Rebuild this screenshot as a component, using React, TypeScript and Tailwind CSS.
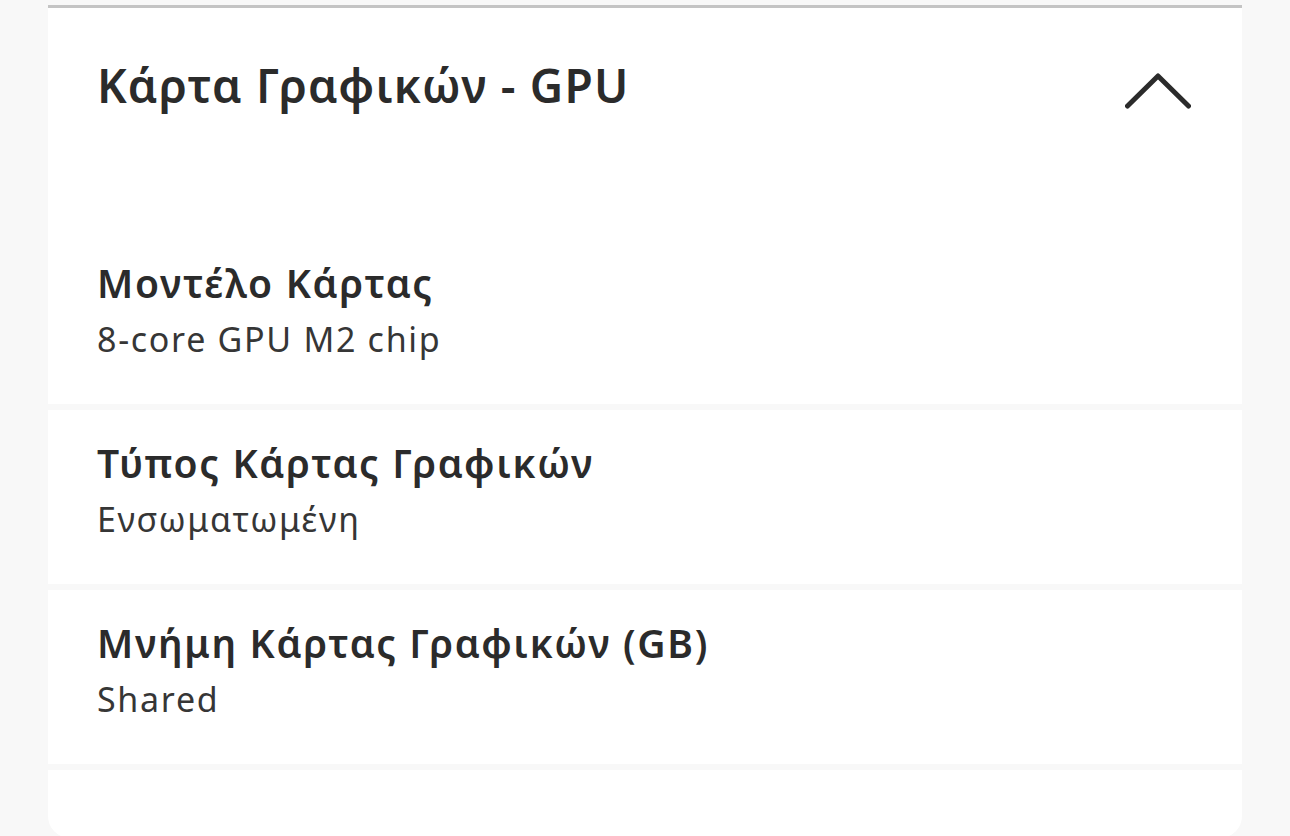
const rows = [
  { label: 'Τύπος Κάρτας Γραφικών', value: 'Ενσωματωμένη' },
  { label: 'Μνήμη Κάρτας Γραφικών (GB)', value: 'Shared' },
];

function Spec({ label, value }: { label: string; value: string }) {
  return (
    <div className="flex flex-col pt-[31px]">
      <div className="text-[39px] font-semibold leading-[44px] tracking-[1.7px] text-[#2b2b2b]">{label}</div>
      <div className="text-[34px] leading-[40px] tracking-[1.7px] mt-[14px] text-[#363636]">{value}</div>
    </div>
  );
}

export default function App() {
  return (
    <div
      className="h-[836px] overflow-hidden bg-[#f8f8f8] px-[48px] pt-[5px]"
      style={{ fontFamily: '"Noto Sans", "DejaVu Sans", sans-serif' }}
    >
      <div className="flex flex-col gap-[6px]">
        {/* header + first spec */}
        <div className="bg-white border-t-[3px] border-[#c4c4c4] pl-[49px] pr-[51px] h-[399px] flex flex-col">
          <div className="flex items-start justify-between pt-[49px] h-[222px]">
            <h2 className="text-[46px] font-semibold leading-[56px] tracking-[1.2px] text-[#2b2b2b]">Κάρτα Γραφικών - GPU</h2>
            <svg width="66" height="36" viewBox="0 0 66 36" className="mt-[16px]" fill="none">
              <path d="M2.5 33 L33 3 L63.5 33" stroke="#2b2b2b" strokeWidth="5" strokeLinecap="round" strokeLinejoin="round" />
            </svg>
          </div>
          <Spec label="Μοντέλο Κάρτας" value="8-core GPU M2 chip" />
        </div>
        {rows.map(r => (
          <div key={r.label} className="bg-white pl-[49px] h-[174px]">
            <Spec label={r.label} value={r.value} />
          </div>
        ))}
        <div className="bg-white h-[68px] rounded-b-[22px]" />
      </div>
    </div>
  );
}
